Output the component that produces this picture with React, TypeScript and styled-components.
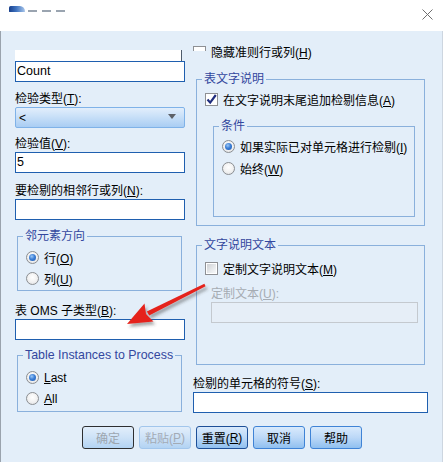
import React from "react";
import styled, { createGlobalStyle, css } from "styled-components";

const GlobalStyle = createGlobalStyle`
  html, body {
    margin: 0;
    padding: 0;
    background: #fff;
  }
  body {
    font-family: "Liberation Sans", "Noto Sans CJK SC", sans-serif;
    font-size: 12px;
    color: #000;
  }
  * {
    box-sizing: border-box;
  }
`;

const Window = styled.div`
  position: relative;
  width: 443px;
  height: 462px;
  overflow: hidden;
  background: #e3eef9;
`;

const TitleBar = styled.div`
  height: 31px;
  background: #fff;
  display: flex;
  align-items: flex-start;
  padding: 6px 10px 0 9px;
`;

const BlurIcon = styled.div`
  width: 16px;
  height: 6px;
  border-radius: 2px 6px 1px 1px;
  background: linear-gradient(90deg, #183f8c 0%, #3f73bf 45%, #a9c6ea 100%);
  filter: blur(0.7px);
`;

const BlurTitle = styled.div`
  width: 38px;
  height: 2px;
  margin: 4px 0 0 3px;
  background: repeating-linear-gradient(
    90deg,
    #9aa4b0 0 9px,
    transparent 9px 14px
  );
  filter: blur(0.6px);
`;

const CloseIcon = styled.svg`
  margin: 3px 0 0 auto;
`;

const Client = styled.div`
  height: 431px;
  border-left: 1px solid #9aa3ad;
  border-right: 1px solid #cdd6e0;
  padding-left: 14px;
`;

const Columns = styled.div`
  display: flex;
  gap: 8px;
`;

const LeftCol = styled.div`
  width: 170px;
  padding-top: 19px;
  display: flex;
  flex-direction: column;
`;

const RightCol = styled.div`
  width: 235px;
  padding-top: 10px;
  display: flex;
  flex-direction: column;
`;

const ListStub = styled.div`
  width: 167px;
  height: 11px;
  background: #fff;
  border-right: 1px solid #4e5b6b;
`;

const Field = styled.div<{ $disabled?: boolean; $width?: number }>`
  width: ${(p) => (p.$width ? `${p.$width}px` : "100%")};
  height: 21px;
  padding-left: 1px;
  line-height: 19px;
  font-size: 12.5px;
  background: #fff;
  border: 1px solid #1f5faf;
  ${(p) =>
    p.$disabled &&
    css`
      background: #e6eef7;
      border-color: #c4c9cf;
    `}
`;

const Label = styled.div<{ $top: number; $disabled?: boolean }>`
  margin-top: ${(p) => p.$top}px;
  height: 16px;
  line-height: 16px;
  white-space: nowrap;
  color: ${(p) => (p.$disabled ? "#a6acb3" : "#000")};
`;

const Mn = styled.span`
  text-decoration: underline;
  text-underline-offset: 1px;
`;

const Select = styled.div`
  height: 21px;
  display: flex;
  align-items: center;
  justify-content: space-between;
  padding: 0 8px 0 3px;
  border: 1px solid #7fb2e8;
  border-radius: 2px;
  background: linear-gradient(#e2eefc 0%, #c9e0f8 45%, #a9cdf3 100%);
  font-size: 12px;
`;

const Caret = styled.span`
  width: 0;
  height: 0;
  border-left: 4px solid transparent;
  border-right: 4px solid transparent;
  border-top: 5px solid #5d6168;
  margin-bottom: 2px;
`;

const Group = styled.fieldset<{ $top: number; $width?: number; $pb: number; $pt: number; $ml?: number; $mr?: number }>`
  margin: ${(p) => p.$top}px ${(p) => p.$mr ?? 0}px 0 ${(p) => p.$ml ?? 0}px;
  width: ${(p) => (p.$width ? `${p.$width}px` : "auto")};
  min-width: 0;
  padding: ${(p) => p.$pt}px 0 ${(p) => p.$pb}px 8px;
  border: 1px solid #8ab0dc;
`;

const Legend = styled.legend<{ $latin?: boolean }>`
  margin-left: -3px;
  padding: 0 2px;
  height: 14px;
  line-height: 14px;
  color: #33479e;
  font-size: ${(p) => (p.$latin ? "12.4px" : "12px")};
  white-space: nowrap;
`;

const OptionRow = styled.div<{ $h?: number }>`
  height: ${(p) => p.$h ?? 21}px;
  display: flex;
  align-items: center;
  gap: 5px;
  white-space: nowrap;
`;

const Radio = styled.span<{ $on?: boolean }>`
  position: relative;
  flex: none;
  width: 13px;
  height: 13px;
  border-radius: 50%;
  border: 1px solid #8b8e92;
  background: radial-gradient(circle at 50% 40%, #ffffff 0%, #f1f1f1 55%, #d7d9dc 100%);
  ${(p) =>
    p.$on &&
    css`
      &::after {
        content: "";
        position: absolute;
        left: 2px;
        top: 2px;
        width: 7px;
        height: 7px;
        border-radius: 50%;
        background: radial-gradient(circle at 40% 35%, #9cc8f6 0%, #3c7fd6 45%, #1b56b0 100%);
      }
    `}
`;

const Check = styled.span<{ $clipped?: boolean }>`
  flex: none;
  width: 13px;
  height: 13px;
  display: flex;
  align-items: center;
  justify-content: center;
  border: 1px solid #8e9094;
  background: #fff;
  ${(p) =>
    p.$clipped &&
    css`
      height: 5px;
      border-bottom: none;
      align-self: flex-start;
      margin-top: 5px;
    `}
`;

const CheckFill = styled.span`
  width: 9px;
  height: 9px;
  background: linear-gradient(135deg, #cfd1d4 0%, #eceef0 70%, #f7f8f9 100%);
`;

const FieldIndent = styled.div`
  margin-left: 6px;
  display: flex;
  flex-direction: column;
`;

const Footer = styled.div`
  margin-top: 13px;
  padding-left: 67px;
  display: flex;
  gap: 5px;
`;

type Tone = "normal" | "faded" | "focus" | "active";

const Button = styled.div<{ $tone: Tone }>`
  width: 52px;
  height: 23px;
  display: flex;
  align-items: center;
  justify-content: center;
  border-radius: 3px;
  font-size: 12px;
  border: 1px solid #3f83d6;
  background: linear-gradient(#d9eafc 0%, #bcd8f7 50%, #90c0f0 100%);
  color: #000;
  ${(p) =>
    p.$tone === "faded" &&
    css`
      border-color: #a2c6ec;
      background: linear-gradient(#e2eefb 0%, #cde2f7 50%, #b3d3f3 100%);
      color: #a3abb5;
    `}
  ${(p) =>
    p.$tone === "focus" &&
    css`
      border-color: #2e2f31;
      background: linear-gradient(#e2eefb 0%, #cde2f7 50%, #b3d3f3 100%);
      color: #9da6b0;
    `}
  ${(p) =>
    p.$tone === "active" &&
    css`
      border-color: #1d4f98;
    `}
`;

const Overlay = styled.svg`
  position: absolute;
  left: 0;
  top: 0;
  pointer-events: none;
`;

const CheckMark = () => (
  <svg width="11" height="11" viewBox="0 0 11 11">
    <path d="M1.5 5.5 L4.2 8.6 L9.8 1" fill="none" stroke="#1f2d7e" strokeWidth="2.2" />
  </svg>
);

const Arrow = () => (
  <Overlay width="443" height="462" viewBox="0 0 443 462">
    <defs>
      <filter id="shadow" x="-20%" y="-20%" width="140%" height="160%">
        <feDropShadow dx="2" dy="3" stdDeviation="1.6" floodColor="#404040" floodOpacity="0.45" />
      </filter>
    </defs>
    <g filter="url(#shadow)" fill="#e5231b">
      <polygon points="204.4,283.8 205.6,286.2 149.2,315.6 146.8,311.4" />
      <polygon points="127,324 144.5,303.5 146,314 153.5,321.5" />
    </g>
  </Overlay>
);

const App: React.FC = () => {
  return (
    <>
      <GlobalStyle />
      <Window>
        <TitleBar>
          <BlurIcon />
          <BlurTitle />
          <CloseIcon width="11" height="11" viewBox="0 0 11 11">
            <path d="M0.5 0.5 L10.5 10.5 M10.5 0.5 L0.5 10.5" stroke="#6e6e6e" strokeWidth="1" />
          </CloseIcon>
        </TitleBar>
        <Client>
          <Columns>
            <LeftCol>
              <ListStub />
              <Field>Count</Field>
              <Label $top={9}>
                检验类型(<Mn>T</Mn>):
              </Label>
              <Select>
                <span>&lt;</span>
                <Caret />
              </Select>
              <Label $top={8}>
                检验值(<Mn>V</Mn>):
              </Label>
              <Field>5</Field>
              <Label $top={10}>
                要检剔的相邻行或列(<Mn>N</Mn>):
              </Label>
              <Field />
              <Group $top={9} $width={165} $ml={2} $pt={4} $pb={1}>
                <Legend>邻元素方向</Legend>
                <OptionRow>
                  <Radio $on />
                  <span>
                    行(<Mn>O</Mn>)
                  </span>
                </OptionRow>
                <OptionRow>
                  <Radio />
                  <span>
                    列(<Mn>U</Mn>)
                  </span>
                </OptionRow>
              </Group>
              <Label $top={12}>
                表 OMS 子类型(<Mn>B</Mn>):
              </Label>
              <Field />
              <Group $top={8} $width={165} $ml={2} $pt={5} $pb={2}>
                <Legend $latin>Table Instances to Process</Legend>
                <OptionRow>
                  <Radio $on />
                  <span>
                    <Mn>L</Mn>ast
                  </span>
                </OptionRow>
                <OptionRow>
                  <Radio />
                  <span>
                    <Mn>A</Mn>ll
                  </span>
                </OptionRow>
              </Group>
            </LeftCol>
            <RightCol>
              <OptionRow>
                <Check $clipped />
                <span>
                  隐藏准则行或列(<Mn>H</Mn>)
                </span>
              </OptionRow>
              <Group $top={10} $ml={3} $mr={3} $pt={3} $pb={8}>
                <Legend>表文字说明</Legend>
                <OptionRow>
                  <Check>
                    <CheckMark />
                  </Check>
                  <span>
                    在文字说明末尾追加检剔信息(<Mn>A</Mn>)
                  </span>
                </OptionRow>
                <Group $top={9} $ml={8} $mr={9} $pt={2} $pb={37}>
                  <Legend>条件</Legend>
                  <OptionRow $h={22}>
                    <Radio $on />
                    <span>
                      如果实际已对单元格进行检剔(<Mn>I</Mn>)
                    </span>
                  </OptionRow>
                  <OptionRow $h={22}>
                    <Radio />
                    <span>
                      始终(<Mn>W</Mn>)
                    </span>
                  </OptionRow>
                </Group>
              </Group>
              <Group $top={12} $ml={3} $mr={3} $pt={6} $pb={41}>
                <Legend>文字说明文本</Legend>
                <OptionRow>
                  <Check>
                    <CheckFill />
                  </Check>
                  <span>
                    定制文字说明文本(<Mn>M</Mn>)
                  </span>
                </OptionRow>
                <FieldIndent>
                  <Label $top={7} $disabled>
                    定制文本(<Mn>U</Mn>):
                  </Label>
                  <Field $disabled $width={207} />
                </FieldIndent>
              </Group>
              <Label $top={11}>
                检剔的单元格的符号(<Mn>S</Mn>):
              </Label>
              <Field />
            </RightCol>
          </Columns>
          <Footer>
            <Button $tone="focus">确定</Button>
            <Button $tone="faded">
              粘贴(<Mn>P</Mn>)
            </Button>
            <Button $tone="active">
              重置(<Mn>R</Mn>)
            </Button>
            <Button $tone="normal">取消</Button>
            <Button $tone="normal">帮助</Button>
          </Footer>
        </Client>
        <Arrow />
      </Window>
    </>
  );
};

export default App;
